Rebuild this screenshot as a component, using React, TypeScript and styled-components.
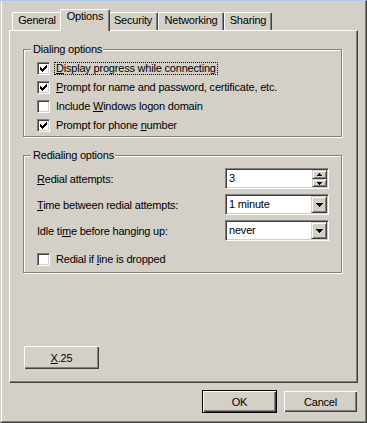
import styled, { createGlobalStyle } from 'styled-components';

const GlobalStyle = createGlobalStyle`
  html, body {
    margin: 0;
    padding: 0;
    background: #d4d0c8;
  }
  body {
    font-family: "Liberation Sans", Arial, sans-serif;
    font-size: 11px;
    letter-spacing: -0.2px;
    color: #000;
  }
`;

const Window = styled.div`
  width: 367px;
  height: 423px;
  box-sizing: border-box;
  background: #d4d0c8;
  border-top: 1px solid #a6caf0;
  border-left: 1px solid #d4d0c8;
  border-right: 1px solid #404040;
  border-bottom: 1px solid #404040;
  display: flex;
  flex-direction: column;
`;

const WindowInner = styled.div`
  flex: 1;
  display: flex;
  flex-direction: column;
  border-left: 1px solid #fff;
  border-right: 1px solid #808080;
  border-bottom: 1px solid #808080;
  padding: 8px 7px;
`;

const TabStrip = styled.div`
  height: 21px;
  display: flex;
  align-items: flex-end;
  padding-left: 3px;
`;

const Tab = styled.div<{ $w: number; $active?: boolean }>`
  box-sizing: border-box;
  width: ${p => p.$w}px;
  height: ${p => (p.$active ? 22 : 18)}px;
  margin: ${p => (p.$active ? '0 -2px -1px -2px' : '0')};
  padding-top: ${p => (p.$active ? 0 : 1)}px;
  position: relative;
  z-index: ${p => (p.$active ? 2 : 1)};
  background: #d4d0c8;
  border-left: 1px solid #fff;
  border-top: 1px solid #fff;
  border-right: 1px solid #404040;
  border-radius: 2px 2px 0 0;
  box-shadow: inset -1px 0 0 #808080;
  line-height: 13px;
  text-align: center;
  white-space: nowrap;
`;

const Panel = styled.div`
  box-sizing: border-box;
  height: 353px;
  display: flex;
  flex-direction: column;
  border-left: 1px solid #fff;
  border-top: 1px solid #fff;
  border-right: 1px solid #404040;
  border-bottom: 1px solid #404040;
  box-shadow: inset -1px -1px 0 #808080;
  padding: 12px 15px 13px 13px;
`;

const Group = styled.fieldset<{ $pt: number; $pb: number; $mt?: number }>`
  margin: ${p => p.$mt ?? 0}px 0 0 0;
  min-width: 0;
  padding: ${p => p.$pt}px 12px ${p => p.$pb}px 13px;
  border: 1px solid #808080;
  box-shadow: 1px 1px 0 #fff, inset 1px 1px 0 #fff;
`;

const Legend = styled.legend`
  margin-left: -6px;
  padding: 0 1px 0 2px;
  line-height: 13px;
  background: #d4d0c8;
`;

const CheckRow = styled.div`
  height: 19px;
  display: flex;
  align-items: center;
`;

const Box = styled.span`
  box-sizing: border-box;
  width: 13px;
  height: 13px;
  flex: none;
  background: #fff;
  border: 1px solid;
  border-color: #808080 #fff #fff #808080;
  box-shadow: inset 1px 1px 0 #404040, inset -1px -1px 0 #d4d0c8;
  padding: 2px;
  margin-right: 4px;
  display: flex;
`;

const CheckLabel = styled.span<{ $focus?: boolean }>`
  line-height: 11px;
  padding: 0 1px;
  border: 1px ${p => (p.$focus ? 'dotted #000' : 'solid transparent')};
  white-space: nowrap;
`;

const SettingRows = styled.div`
  display: flex;
  flex-direction: column;
  gap: 5px;
  margin-bottom: 9px;
`;

const SettingRow = styled.div`
  height: 21px;
  display: flex;
  align-items: center;
  justify-content: space-between;
`;

const Sunken = styled.div`
  box-sizing: border-box;
  width: 104px;
  height: 21px;
  padding: 1px;
  display: flex;
  background: #fff;
  border: 1px solid;
  border-color: #808080 #fff #fff #808080;
  box-shadow: inset 1px 1px 0 #404040, inset -1px -1px 0 #d4d0c8;
`;

const FieldText = styled.div`
  flex: 1;
  padding-left: 2px;
  line-height: 17px;
  white-space: nowrap;
`;

const SpinStack = styled.div`
  width: 15px;
  flex: none;
  display: flex;
  flex-direction: column;
`;

const RaisedPart = styled.div<{ $h: number; $w?: number }>`
  box-sizing: border-box;
  flex: none;
  height: ${p => p.$h}px;
  ${p => (p.$w ? `width: ${p.$w}px;` : '')}
  background: #d4d0c8;
  border-top: 1px solid #d4d0c8;
  border-left: 1px solid #d4d0c8;
  border-right: 1px solid #404040;
  border-bottom: 1px solid #404040;
  box-shadow: inset 1px 1px 0 #fff, inset -1px -1px 0 #808080;
  display: flex;
  align-items: center;
  justify-content: center;
`;

const Button = styled.div<{ $default?: boolean }>`
  box-sizing: border-box;
  width: 75px;
  height: 23px;
  background: #d4d0c8;
  border: 1px solid ${p => (p.$default ? '#000' : 'transparent')};
  display: flex;
`;

const ButtonFace = styled.div`
  flex: 1;
  display: flex;
  align-items: center;
  justify-content: center;
  box-shadow: inset 1px 1px 0 #fff, inset -1px -1px 0 #404040, inset -2px -2px 0 #808080;
`;

const PlainButton = styled.div`
  box-sizing: border-box;
  width: 75px;
  height: 23px;
  margin-left: 1px;
  margin-top: auto;
  display: flex;
  align-items: center;
  justify-content: center;
  background: #d4d0c8;
  box-shadow: inset 1px 1px 0 #fff, inset -1px -1px 0 #404040, inset -2px -2px 0 #808080;
`;

const Footer = styled.div`
  margin-top: 7px;
  display: flex;
  justify-content: flex-end;
  gap: 6px;
`;

const Tick = () => (
  <svg width="7" height="7" viewBox="0 0 7 7" shapeRendering="crispEdges">
    <path
      fill="#000"
      d="M0 2h1v3H0z M1 3h1v3H1z M2 4h1v3H2z M3 3h1v3H3z M4 2h1v3H4z M5 1h1v3H5z M6 0h1v3H6z"
    />
  </svg>
);

const DownArrow = () => (
  <svg width="7" height="4" viewBox="0 0 7 4" shapeRendering="crispEdges">
    <path fill="#000" d="M0 0h7v1H0z M1 1h5v1H1z M2 2h3v1H2z M3 3h1v1H3z" />
  </svg>
);

const SmallArrow = ({ up }: { up?: boolean }) => (
  <svg width="5" height="3" viewBox="0 0 5 3" shapeRendering="crispEdges">
    <path
      fill="#000"
      d={up ? 'M2 0h1v1H2z M1 1h3v1H1z M0 2h5v1H0z' : 'M0 0h5v1H0z M1 1h3v1H1z M2 2h1v1H2z'}
    />
  </svg>
);

const Check = ({ checked, focus, children }: { checked?: boolean; focus?: boolean; children: React.ReactNode }) => (
  <CheckRow>
    <Box>{checked && <Tick />}</Box>
    <CheckLabel $focus={focus}>{children}</CheckLabel>
  </CheckRow>
);

const Combo = ({ value }: { value: string }) => (
  <Sunken>
    <FieldText>{value}</FieldText>
    <RaisedPart $h={17} $w={16}>
      <DownArrow />
    </RaisedPart>
  </Sunken>
);

const tabs = [
  { name: 'General', w: 50 },
  { name: 'Options', w: 50, active: true },
  { name: 'Security', w: 50 },
  { name: 'Networking', w: 66 },
  { name: 'Sharing', w: 48 },
];

export default function App() {
  return (
    <>
      <GlobalStyle />
      <Window>
        <WindowInner>
          <TabStrip>
            {tabs.map(t => (
              <Tab key={t.name} $w={t.w} $active={t.active}>
                {t.name}
              </Tab>
            ))}
          </TabStrip>
          <Panel>
            <Group $pt={3} $pb={1}>
              <Legend>Dialing options</Legend>
              <Check checked focus>
                <u>D</u>isplay progress while connecting
              </Check>
              <Check checked>
                <u>P</u>rompt for name and password, certificate, etc.
              </Check>
              <Check>
                Include <u>W</u>indows logon domain
              </Check>
              <Check checked>
                Prompt for phone <u>n</u>umber
              </Check>
            </Group>

            <Group $pt={6} $pb={3} $mt={12}>
              <Legend>Redialing options</Legend>
              <SettingRows>
                <SettingRow>
                  <span>
                    <u>R</u>edial attempts:
                  </span>
                  <Sunken>
                    <FieldText>3</FieldText>
                    <SpinStack>
                      <RaisedPart $h={9}>
                        <SmallArrow up />
                      </RaisedPart>
                      <RaisedPart $h={8}>
                        <SmallArrow />
                      </RaisedPart>
                    </SpinStack>
                  </Sunken>
                </SettingRow>
                <SettingRow>
                  <span>
                    <u>T</u>ime between redial attempts:
                  </span>
                  <Combo value="1 minute" />
                </SettingRow>
                <SettingRow>
                  <span>
                    Idle ti<u>m</u>e before hanging up:
                  </span>
                  <Combo value="never" />
                </SettingRow>
              </SettingRows>
              <Check>
                Redial if <u>l</u>ine is dropped
              </Check>
            </Group>

            <PlainButton>
              <span>
                <u>X</u>.25
              </span>
            </PlainButton>
          </Panel>
          <Footer>
            <Button $default>
              <ButtonFace>OK</ButtonFace>
            </Button>
            <Button>
              <ButtonFace>Cancel</ButtonFace>
            </Button>
          </Footer>
        </WindowInner>
      </Window>
    </>
  );
}
